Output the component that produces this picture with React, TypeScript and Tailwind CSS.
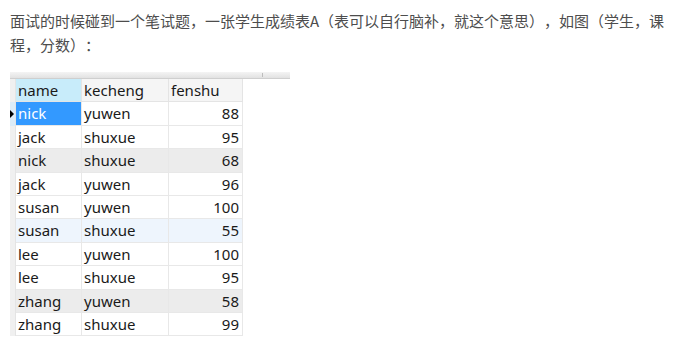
const rows = [
  { name: "nick", kecheng: "yuwen", fenshu: 88 },
  { name: "jack", kecheng: "shuxue", fenshu: 95 },
  { name: "nick", kecheng: "shuxue", fenshu: 68 },
  { name: "jack", kecheng: "yuwen", fenshu: 96 },
  { name: "susan", kecheng: "yuwen", fenshu: 100 },
  { name: "susan", kecheng: "shuxue", fenshu: 55 },
  { name: "lee", kecheng: "yuwen", fenshu: 100 },
  { name: "lee", kecheng: "shuxue", fenshu: 95 },
  { name: "zhang", kecheng: "yuwen", fenshu: 58 },
  { name: "zhang", kecheng: "shuxue", fenshu: 99 },
];

// row stripes as in the grid screenshot
const rowBg: Record<number, string> = {
  2: "bg-[#ececec]",
  5: "bg-[#eef5fd]",
  8: "bg-[#ececec]",
};

export default function App() {
  return (
    <div className="w-[678px] h-[355px] bg-white overflow-hidden">
      <p className="pl-[10px] pr-[4px] pt-[9px] text-[15px] leading-[24px] text-[#4d4d4d] font-['Noto_Sans_CJK_SC',sans-serif] [text-spacing-trim:space-all]">
        面试的时候碰到一个笔试题，一张学生成绩表A（表可以自行脑补，就这个意思），如图（学生，课程，分数）：
      </p>

      <div className="ml-[10px] mt-[15px] w-[280px]">
        <div className="relative h-[7px] bg-gradient-to-b from-[#f4f4f4] to-[#e2e2e2] border-b border-[#cfcfcf]">
          <span className="absolute left-[252px] top-[1px] h-[4px] w-px bg-[#bdbdbd]" />
        </div>
        <div className="w-[233px] font-['Noto_Sans','Open_Sans',sans-serif] text-[15px] text-[#1a1a1a]">
          <div className="flex h-[23.4px]">
            <div className="w-[6px] bg-[#f0f0f0] border-r border-[#e4e4e4]" />
            <div className="w-[66px] bg-[#c8ecfa] border-r border-b border-[#e4e4e4] pl-[2px] leading-[23px]">name</div>
            <div className="w-[87px] bg-[#f5f5f5] border-r border-b border-[#e4e4e4] pl-[2px] leading-[23px]">kecheng</div>
            <div className="w-[74px] bg-[#f5f5f5] border-r border-b border-[#e4e4e4] pl-[2px] leading-[23px]">fenshu</div>
          </div>
          {rows.map((r, i) => (
            <div key={i} className={`flex h-[23.4px] ${rowBg[i] ?? "bg-white"}`}>
              <div className={`relative w-[6px] border-r border-[#e4e4e4] ${i === 0 ? "bg-[#dcecf8]" : "bg-[#f0f0f0]"}`}>
                {i === 0 && (
                  <span className="absolute left-0 top-[8px] h-0 w-0 border-y-[4px] border-y-transparent border-l-[4px] border-l-black" />
                )}
              </div>
              <div
                className={`w-[66px] border-r border-b border-[#e8e8e8] pl-[2px] leading-[22px] ${
                  i === 0 ? "bg-[#3399ff] text-white" : ""
                }`}
              >
                {r.name}
              </div>
              <div className="w-[87px] border-r border-b border-[#e8e8e8] pl-[2px] leading-[22px]">{r.kecheng}</div>
              <div className="w-[74px] border-r border-b border-[#e8e8e8] pr-[3px] text-right leading-[22px]">{r.fenshu}</div>
            </div>
          ))}
        </div>
      </div>
    </div>
  );
}
